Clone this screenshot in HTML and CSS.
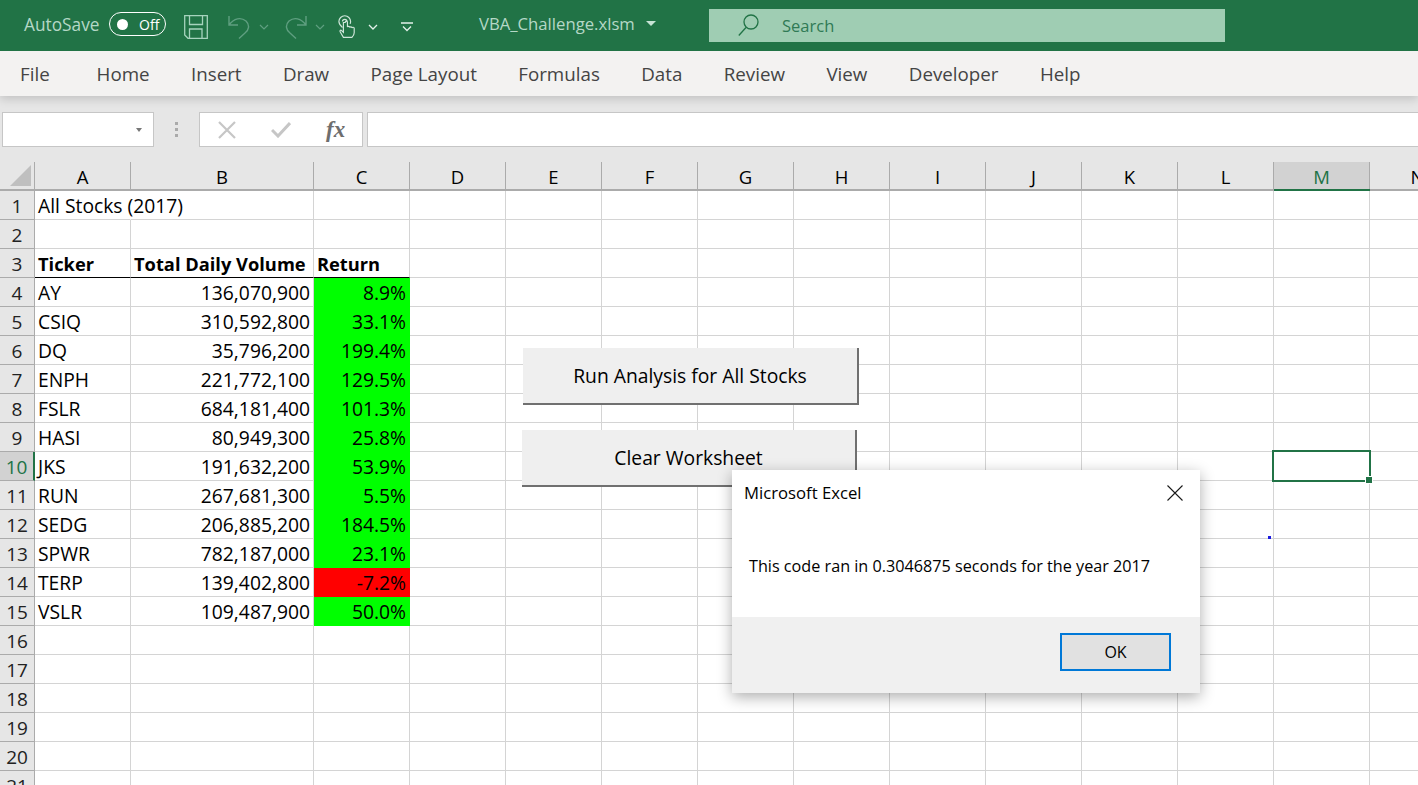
FILE: index.html
```html
<!DOCTYPE html>
<html lang="en">
<head>
<meta charset="utf-8">
<title>VBA_Challenge.xlsm - Excel</title>
<link rel="stylesheet" href="styles.css">
</head>
<body>
<div class="app">
  <header class="titlebar">
    <span class="autosave">AutoSave</span>
    <span class="toggle"><span class="knob"></span><span class="toggle-text">Off</span></span>
    <svg class="qa save" width="24" height="24" viewBox="0 0 24 24" fill="none" stroke="#a6d3bd" stroke-width="1.300"><path d="M.7.7h22.600v22.600H4L.7 20zM5.500.7v8.800h13V.7M5.500 23.300V14h12.500v9.300"/></svg>
    <svg class="qa undo" width="22" height="24" viewBox="0 0 22 24" fill="none" stroke="#5f9f80" stroke-width="1.400"><path d="M1 1v9h9M1 10C6 3 13 2 18 6c4 4 3 9-1 12l-6 5.500"/></svg>
    <svg class="chev dim undo-chev" width="10" height="6" viewBox="0 0 10 6" fill="none" stroke="#5f9f80" stroke-width="1.200"><path d="M1 1l4 4 4-4"/></svg>
    <svg class="qa redo" width="22" height="24" viewBox="0 0 22 24" fill="none" stroke="#5f9f80" stroke-width="1.400"><path d="M21 1v9h-9M21 10C16 3 9 2 4 6c-4 4-3 9 1 12l6 5.500"/></svg>
    <svg class="chev dim redo-chev" width="10" height="6" viewBox="0 0 10 6" fill="none" stroke="#5f9f80" stroke-width="1.200"><path d="M1 1l4 4 4-4"/></svg>
    <svg class="qa touch" width="18" height="24" viewBox="0 0 20 26" fill="none" stroke="#cfe6da" stroke-width="1.300"><path d="M5 13.500C2 11 1 9 1 7a6.500 6.500 0 0 1 13 0c0 1-.2 1.700-.5 2.500"/><path d="M5 7a2.500 2.500 0 0 1 5 0"/><path d="M6 8v11l-2-2c-1-1-2.500 0-1.500 1.500L6 24.500h9.500c1.500-1.500 2.500-3 2.500-5v-5c0-1.500-2-1.500-2.500-.5 0-1.500-2-1.500-2.500-.5 0-1.500-2-1.500-2.500-.5V8c0-2-2.500-2-2.500 0z"/></svg>
    <svg class="chev touch-chev" width="10" height="6" viewBox="0 0 10 6" fill="none" stroke="#e3f1ea" stroke-width="1.300"><path d="M1 1l4 4 4-4"/></svg>
    <svg class="chev more" width="12" height="10" viewBox="0 0 12 10" fill="none" stroke="#e3f1ea" stroke-width="1.300"><path d="M0 1h12M2 4.500l4 4 4-4"/></svg>
    <span class="filename">VBA_Challenge.xlsm</span>
    <span class="caret"></span>
    <div class="searchbox">
      <svg width="21" height="23" viewBox="0 0 21 23" fill="none" stroke="#217346" stroke-width="1.300"><circle cx="13" cy="8" r="7"/><path d="M8 13.500L.8 21.500"/></svg>
      <span>Search</span>
    </div>
  </header>

  <nav class="tabs">
    <span class="tab first">File</span>
    <span class="tab">Home</span>
    <span class="tab">Insert</span>
    <span class="tab">Draw</span>
    <span class="tab">Page Layout</span>
    <span class="tab">Formulas</span>
    <span class="tab">Data</span>
    <span class="tab">Review</span>
    <span class="tab">View</span>
    <span class="tab">Developer</span>
    <span class="tab">Help</span>
  </nav>

  <div class="formulabar">
    <div class="namebox"><span class="namecaret"></span></div>
    <div class="grip"><i></i><i></i><i></i></div>
    <div class="fxbox">
      <svg width="18" height="18" viewBox="0 0 18 18" fill="none" stroke="#c6c6c6" stroke-width="2.200"><path d="M1 1l16 16M17 1L1 17"/></svg>
      <svg width="20" height="16" viewBox="0 0 20 16" fill="none" stroke="#c6c6c6" stroke-width="3"><path d="M1 8l6 6L19 1"/></svg>
      <span class="fx">fx</span>
    </div>
    <div class="formulainput"></div>
  </div>

  <main class="sheet">
    <div class="colheads">
      <div class="corner"><span class="tri"></span></div>
      <div class="ch a">A</div><div class="ch b">B</div><div class="ch">C</div><div class="ch">D</div><div class="ch">E</div><div class="ch">F</div><div class="ch">G</div><div class="ch">H</div><div class="ch">I</div><div class="ch">J</div><div class="ch">K</div><div class="ch">L</div><div class="ch sel">M</div><div class="ch">N</div>
    </div>
    <div class="row"><div class="rh">1</div><div class="cell wide">All Stocks (2017)</div><div class="cell"></div><div class="cell"></div><div class="rest"></div></div>
    <div class="row"><div class="rh">2</div><div class="cell"></div><div class="cell"></div><div class="cell"></div><div class="rest"></div></div>
    <div class="row"><div class="rh">3</div><div class="cell bold hd">Ticker</div><div class="cell bold hd">Total Daily Volume</div><div class="cell bold hd">Return</div><div class="rest"></div></div>
    <div class="row"><div class="rh">4</div><div class="cell">AY</div><div class="cell num">136,070,900</div><div class="cell num up">8.9%</div><div class="rest"></div></div>
    <div class="row"><div class="rh">5</div><div class="cell">CSIQ</div><div class="cell num">310,592,800</div><div class="cell num up">33.1%</div><div class="rest"></div></div>
    <div class="row"><div class="rh">6</div><div class="cell">DQ</div><div class="cell num">35,796,200</div><div class="cell num up">199.4%</div><div class="rest"></div></div>
    <div class="row"><div class="rh">7</div><div class="cell">ENPH</div><div class="cell num">221,772,100</div><div class="cell num up">129.5%</div><div class="rest"></div></div>
    <div class="row"><div class="rh">8</div><div class="cell">FSLR</div><div class="cell num">684,181,400</div><div class="cell num up">101.3%</div><div class="rest"></div></div>
    <div class="row"><div class="rh">9</div><div class="cell">HASI</div><div class="cell num">80,949,300</div><div class="cell num up">25.8%</div><div class="rest"></div></div>
    <div class="row"><div class="rh rsel">10</div><div class="cell">JKS</div><div class="cell num">191,632,200</div><div class="cell num up">53.9%</div><div class="rest"></div></div>
    <div class="row"><div class="rh">11</div><div class="cell">RUN</div><div class="cell num">267,681,300</div><div class="cell num up">5.5%</div><div class="rest"></div></div>
    <div class="row"><div class="rh">12</div><div class="cell">SEDG</div><div class="cell num">206,885,200</div><div class="cell num up">184.5%</div><div class="rest"></div></div>
    <div class="row"><div class="rh">13</div><div class="cell">SPWR</div><div class="cell num">782,187,000</div><div class="cell num up">23.1%</div><div class="rest"></div></div>
    <div class="row"><div class="rh">14</div><div class="cell">TERP</div><div class="cell num">139,402,800</div><div class="cell num down">-7.2%</div><div class="rest"></div></div>
    <div class="row"><div class="rh">15</div><div class="cell">VSLR</div><div class="cell num">109,487,900</div><div class="cell num up">50.0%</div><div class="rest"></div></div>
    <div class="row"><div class="rh">16</div><div class="cell"></div><div class="cell"></div><div class="cell"></div><div class="rest"></div></div>
    <div class="row"><div class="rh">17</div><div class="cell"></div><div class="cell"></div><div class="cell"></div><div class="rest"></div></div>
    <div class="row"><div class="rh">18</div><div class="cell"></div><div class="cell"></div><div class="cell"></div><div class="rest"></div></div>
    <div class="row"><div class="rh">19</div><div class="cell"></div><div class="cell"></div><div class="cell"></div><div class="rest"></div></div>
    <div class="row"><div class="rh">20</div><div class="cell"></div><div class="cell"></div><div class="cell"></div><div class="rest"></div></div>
    <div class="row"><div class="rh">21</div><div class="cell"></div><div class="cell"></div><div class="cell"></div><div class="rest"></div></div>

    <button class="xl-btn run">Run Analysis for All Stocks</button>
    <button class="xl-btn clear">Clear Worksheet</button>
    <div class="selection"><span class="handle"></span></div>
    <span class="dot"></span>
  </main>

  <section class="dialog">
    <div class="dlg-title"><span>Microsoft Excel</span>
      <svg width="16" height="16" viewBox="0 0 16 16" fill="none" stroke="#1a1a1a" stroke-width="1.100"><path d="M.5.5l15 15M15.500.5l-15 15"/></svg>
    </div>
    <div class="dlg-msg">This code ran in 0.3046875 seconds for the year 2017</div>
    <div class="dlg-foot"><button class="ok">OK</button></div>
  </section>
</div>
</body>
</html>
```
FILE: styles.css
```css
* { box-sizing: border-box; }
html, body { margin: 0; height: 100%; }
body { font-family: "Open Sans", "Noto Sans", sans-serif; color: #000; overflow: hidden; background: #fff; }
.app { position: relative; width: 1418px; height: 785px; overflow: hidden; display: flex; flex-direction: column; }

.titlebar { height: 51px; flex: none; background: #217346; display: flex; align-items: center; color: #fff; position: relative; z-index: 2; }
.autosave { margin-left: 24px; width: 76px; font-size: 17.300px; color: #b5d8c6; white-space: nowrap; margin-top: -2px; }
.toggle { margin-left: 9px; margin-top: -3px; width: 57px; height: 24px; border: 1.500px solid #fff; border-radius: 12px; display: flex; align-items: center; flex: none; }
.knob { width: 11px; height: 11px; margin-left: 7px; background: #fff; border-radius: 50%; }
.toggle-text { margin-left: 11px; font-size: 14px; }
.qa { flex: none; }
.save { margin-left: 18px; margin-top: 2px; }
.undo { margin-left: 20px; margin-top: 2px; }
.chev { flex: none; margin-top: 2px; }
.undo-chev { margin-left: 9px; }
.redo { margin-left: 16px; margin-top: 2px; }
.redo-chev { margin-left: 8px; }
.touch { margin-left: 13px; margin-top: 2px; }
.touch-chev { margin-left: 12px; }
.more { margin-left: 23px; }
.filename { margin-left: 66px; width: 156px; font-size: 16.700px; color: #b5d8c6; white-space: nowrap; margin-top: -5px; }
.caret { margin-left: 11px; border: 5px solid transparent; border-top: 5px solid #c8e3d5; border-bottom: 0; margin-top: -4px; }
.searchbox { margin-left: 53px; width: 516px; height: 33px; background: #9fcdb3; display: flex; align-items: center; padding-left: 29px; font-size: 16.500px; color: #2f7a55; flex: none; }
.searchbox span { margin-left: 23px; }

.tabs { height: 45px; flex: none; background: #f3f2f1; display: flex; align-items: center; padding-left: 20px; gap: 41.400px; box-shadow: 0 3px 9px rgba(0,0,0,.16); position: relative; z-index: 1; font-size: 18.750px; color: #444; }
.tab { white-space: nowrap; }
.first { margin-right: 5.500px; }

.formulabar { height: 66px; flex: none; background: #e6e6e6; display: flex; padding: 16px 0 15px 2px; align-items: stretch; }
.namebox { width: 152px; background: #fff; border: 1px solid #c6c6c6; display: flex; align-items: center; justify-content: flex-end; padding-right: 11px; }
.namecaret { border: 3.500px solid transparent; border-top: 4px solid #777; border-bottom: 0; margin-top: 1px; }
.grip { width: 45px; display: flex; flex-direction: column; align-items: center; justify-content: center; gap: 3px; }
.grip i { width: 3px; height: 3px; background: #aaa; }
.fxbox { width: 164px; background: #fff; border: 1px solid #c6c6c6; display: flex; align-items: center; padding-left: 18px; gap: 35px; }
.fx { font-family: "Liberation Serif", serif; font-style: italic; font-weight: bold; font-size: 23px; color: #6e6e6e; }
.formulainput { flex: 1; margin-left: 4px; background: #fff; border: 1px solid #c6c6c6; border-right: 0; }

.sheet { position: relative; flex: 1; overflow: hidden; }
.row { display: grid; grid-template-columns: 35px 96px 183px 96px 1fr; grid-template-rows: 29px; height: 29px; }
.colheads { display: grid; grid-template-columns: 35px 96px 183px repeat(12, 96px); height: 29px; background: #e6e6e6; border-bottom: 2px solid #ababab; }
.corner { position: relative; border-right: 1px solid #ababab; }
.tri { position: absolute; right: 3px; bottom: 3px; width: 0; height: 0; border-style: solid; border-width: 0 0 21px 21px; border-color: transparent transparent #bfbfbf transparent; }
.ch { font-size: 18.500px; line-height: 30px; height: 27px; text-align: center; border-right: 1px solid #ababab; color: #000; }
.sel { background: #d2d2d2; color: #217346; box-shadow: 0 2px 0 #217346; position: relative; }
.rh { background: #e6e6e6; border-right: 1px solid #ababab; border-bottom: 1px solid #ababab; font-size: 19px; line-height: 30px; text-align: center; color: #222; overflow: visible; }
.rsel { background: #d2d2d2; color: #217346; border-right: 2px solid #217346; }
.cell { border-right: 1px solid #d4d4d4; border-bottom: 1px solid #d4d4d4; font-size: 19.300px; line-height: 30px; padding: 0 3px; white-space: nowrap; min-width: 0; }
.wide { overflow: visible; border-right-color: transparent; }
.bold { font-weight: bold; font-size: 18.300px; }
.hd { border-bottom: 1px solid #000; }
.num { text-align: right; }
.up { background: #00ff00; border-color: #00ff00; }
.down { background: #ff0000; border-color: #ff0000; }
.rest { border-bottom: 1px solid #d4d4d4; background: repeating-linear-gradient(to right, transparent 0, transparent 95px, #d4d4d4 95px, #d4d4d4 96px); }

.xl-btn { position: absolute; background: #efefef; border: 0; border-right: 2px solid #707070; border-bottom: 2px solid #707070; font: 19.300px "Open Sans", "Noto Sans", sans-serif; color: #000; padding: 0; }
.run { left: 523px; top: 186px; width: 336px; height: 57px; }
.clear { left: 522px; top: 268px; width: 335px; height: 57px; }
.selection { position: absolute; left: 1272px; top: 288px; width: 99px; height: 32px; border: 2px solid #217346; }
.handle { position: absolute; right: -4px; bottom: -4px; box-sizing: content-box; width: 6px; height: 6px; background: #217346; border: 1px solid #fff; }
.dot { position: absolute; left: 1268px; top: 374px; width: 3px; height: 3px; background: #1a1ae0; }

.dialog { position: absolute; left: 732px; top: 470px; width: 468px; height: 223px; background: #fff; box-shadow: 0 4px 14px rgba(0,0,0,.32); display: flex; flex-direction: column; z-index: 3; }
.dlg-title { height: 44px; flex: none; display: flex; justify-content: space-between; align-items: center; padding: 0 17px 0 12px; font-size: 16.700px; color: #000; }
.dlg-title svg { margin-top: 2px; }
.dlg-msg { flex: 1; font-size: 16.200px; padding: 41px 0 0 17px; color: #000; }
.dlg-foot { height: 76px; flex: none; background: #f0f0f0; display: flex; justify-content: flex-end; align-items: flex-start; padding: 16px 29px 0 0; }
.ok { width: 111px; height: 38px; background: #e1e1e1; border: 2px solid #0078d7; font: 16px "Open Sans", "Noto Sans", sans-serif; color: #000; padding: 0; }
```
